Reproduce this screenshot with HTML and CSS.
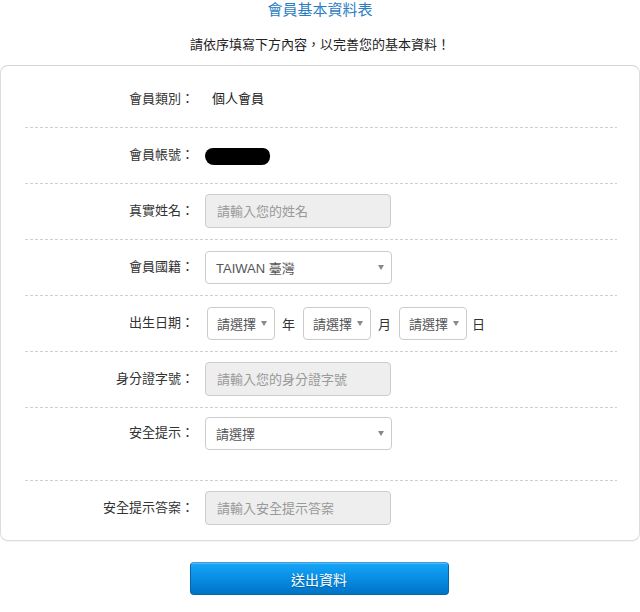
FILE: index.html
```html
<!DOCTYPE html>
<html lang="zh-Hant">
<head>
<meta charset="utf-8">
<title>會員基本資料表</title>
<link rel="stylesheet" href="styles.css">
</head>
<body>
<h1 class="title">會員基本資料表</h1>
<p class="subtitle">請依序填寫下方內容，以完善您的基本資料！</p>
<div class="card">
  <div class="row">
    <div class="label">會員類別：</div>
    <div class="value">個人會員</div>
  </div>
  <div class="row">
    <div class="label">會員帳號：</div>
    <div class="blob"></div>
  </div>
  <div class="row">
    <div class="label">真實姓名：</div>
    <input class="input" type="text" placeholder="請輸入您的姓名">
  </div>
  <div class="row">
    <div class="label">會員國籍：</div>
    <div class="select select-wide"><span>TAIWAN 臺灣</span><i class="arrow"></i></div>
  </div>
  <div class="row">
    <div class="label">出生日期：</div>
    <div class="date">
      <div class="select select-small"><span>請選擇</span><i class="arrow"></i></div>
      <span class="unit">年</span>
      <div class="select select-small"><span>請選擇</span><i class="arrow"></i></div>
      <span class="unit">月</span>
      <div class="select select-small"><span>請選擇</span><i class="arrow"></i></div>
      <span class="unit">日</span>
    </div>
  </div>
  <div class="row">
    <div class="label">身分證字號：</div>
    <input class="input" type="text" placeholder="請輸入您的身分證字號">
  </div>
  <div class="row row-tall">
    <div class="label">安全提示：</div>
    <div class="select select-wide"><span>請選擇</span><i class="arrow"></i></div>
  </div>
  <div class="row row-last">
    <div class="label">安全提示答案：</div>
    <input class="input" type="text" placeholder="請輸入安全提示答案">
  </div>
</div>
<div class="actions">
  <button class="submit" type="button">送出資料</button>
</div>
</body>
</html>
```
FILE: styles.css
```css
* { box-sizing: border-box; }

body {
  margin: 0;
  background: #fff;
  color: #333;
  font-family: "Liberation Sans", "Noto Sans CJK TC", sans-serif;
  font-size: 13px;
}

.title {
  margin: 0;
  text-align: center;
  font-size: 15px;
  line-height: 20px;
  font-weight: normal;
  color: #2a7dc4;
}

.subtitle {
  margin: 15px 0 0;
  text-align: center;
  font-size: 13px;
  line-height: 20px;
  color: #222;
}

.card {
  margin-top: 10px;
  border: 1px solid #dcdcdc;
  border-top-color: #d4d4d4;
  border-radius: 8px;
  padding: 6px 22px 5px 24px;
  box-shadow: 0 1px 1px rgba(0,0,0,0.04);
}

.row {
  display: flex;
  align-items: center;
  min-height: 56px;
  padding: 10px 0 12px;
  background-image: linear-gradient(to right, #d0d0d0 3px, transparent 3px);
  background-size: 5px 1px;
  background-repeat: repeat-x;
  background-position: left bottom;
}

.row-tall {
  padding: 8px 0 31px;
  min-height: 0;
}

.row-last {
  background: none;
  padding: 10px 0 10px;
  min-height: 0;
}

.label {
  width: 169px;
  flex: none;
  text-align: right;
  line-height: 34px;
  margin-right: 11px;
  color: #333;
}

.value {
  padding-left: 7px;
  line-height: 34px;
  color: #222;
}

.blob {
  width: 65px;
  height: 17px;
  margin-top: 2px;
  background: #000;
  border-radius: 9px 8px 9px 10px;
}

.input {
  width: 186px;
  height: 34px;
  border: 1px solid #cccccc;
  border-radius: 4px;
  background: #eeeeee;
  padding: 0 11px;
  font: inherit;
  font-size: 13px;
  color: #555;
  outline: none;
}

.input::placeholder {
  color: #999;
}

.select {
  display: flex;
  align-items: center;
  justify-content: space-between;
  height: 33px;
  border: 1px solid #cccccc;
  border-radius: 4px;
  background: #fff;
  padding: 0 7px 0 10px;
  color: #555;
}

.select-wide {
  width: 187px;
}

.select-small {
  width: 68px;
  padding-left: 9px;
}

.arrow {
  width: 0;
  height: 0;
  border-left: 3px solid transparent;
  border-right: 3px solid transparent;
  border-top: 5px solid #888;
  margin-top: 1px;
}

.date {
  display: flex;
  align-items: center;
  margin-left: 2px;
}

.unit {
  margin: 0 8px 0 7px;
  color: #333;
}

.unit:last-child {
  margin-right: 0;
  margin-left: 5px;
}

.actions {
  display: flex;
  justify-content: center;
  margin-top: 21px;
}

.submit {
  width: 259px;
  height: 33px;
  margin-left: -2px;
  border: 1px solid #0b64a8;
  border-top-color: #3d9be0;
  border-radius: 4px;
  background: linear-gradient(to bottom, #17a6f6 0%, #0890e6 45%, #0072c6 100%);
  color: #fff;
  font-family: "Liberation Sans", "Noto Sans CJK TC", sans-serif;
  font-size: 14px;
  text-shadow: 0 1px 1px rgba(0,0,0,0.25);
  box-shadow: inset 0 1px 0 rgba(255,255,255,0.25);
}
```
